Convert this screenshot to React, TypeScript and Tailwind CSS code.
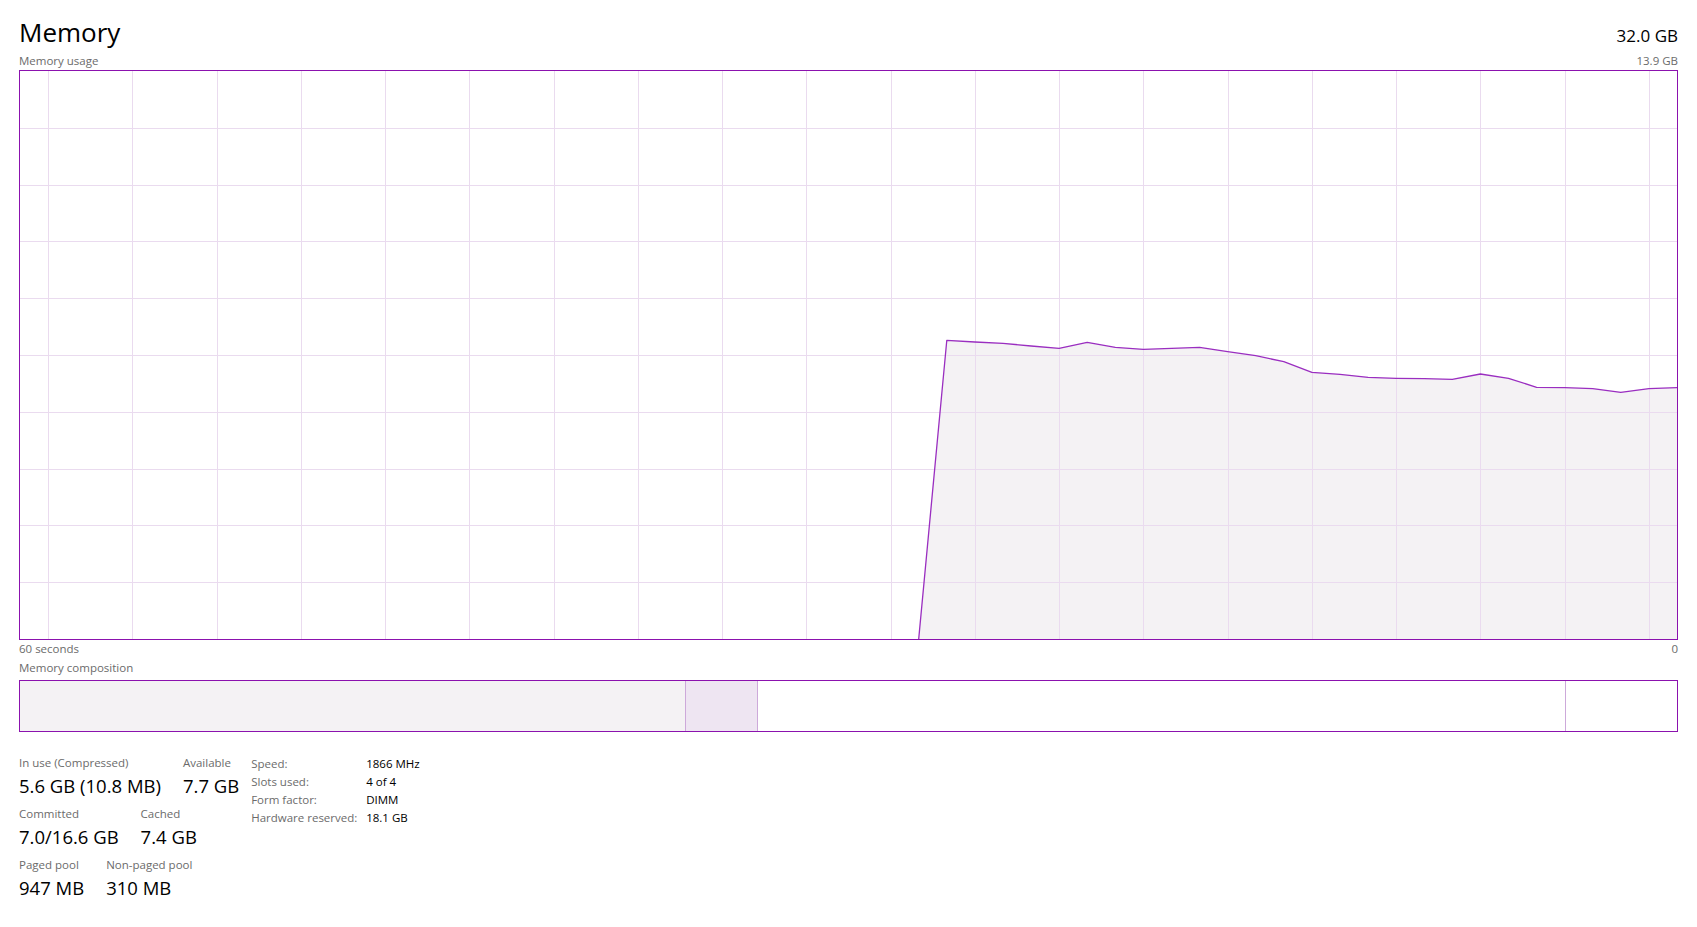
import React from "react";

const font = { fontFamily: '"Segoe UI", "Open Sans", sans-serif' };

// memory usage samples, pixel y inside the 1657x568 plot (index 32 sits on the floor)
const usage: [number, number][] = [
  [32, 568],
  [33, 269.3],
  [34, 271],
  [35, 272.3],
  [36, 275],
  [37, 277.3],
  [38, 271.3],
  [39, 276.3],
  [40, 278.3],
  [41, 277.3],
  [42, 276.3],
  [43, 280.7],
  [44, 284.7],
  [45, 290.7],
  [46, 301.3],
  [47, 303.3],
  [48, 306.3],
  [49, 307.3],
  [50, 307.7],
  [51, 308.3],
  [52, 303],
  [53, 307.3],
  [54, 316.3],
  [55, 316.7],
  [56, 317.7],
  [57, 321.3],
  [58, 317.7],
  [59, 316.7],
];

const W = 1657;
const H = 568;
const step = W / 59;

function UsageChart() {
  const pts = usage.map(([i, y]) => `${(i * step).toFixed(1)},${y}`).join(" ");
  const area = `${pts} ${W},${H} ${(32 * step).toFixed(1)},${H}`;
  const vLines = Array.from({ length: 20 }, (_, k) => Math.round(28 + 84.25 * k) + 0.5);
  const hLines = Array.from({ length: 9 }, (_, k) => Math.round(56.8 * (k + 1)) + 0.5);

  return (
    <div className="h-[570px] border border-[#8b12ae] bg-white">
      <svg className="block h-full w-full" viewBox={`0 0 ${W} ${H}`} preserveAspectRatio="none">
        <polygon points={area} fill="#f4f2f4" />
        {vLines.map((x) => (
          <line key={`v${x}`} x1={x} x2={x} y1={0} y2={H} stroke="#eadbef" strokeWidth={1} />
        ))}
        {hLines.map((y) => (
          <line key={`h${y}`} x1={0} x2={W} y1={y} y2={y} stroke="#eadbef" strokeWidth={1} />
        ))}
        <polyline points={pts} fill="none" stroke="#9a2ec0" strokeWidth={1.3} strokeLinejoin="round" />
      </svg>
    </div>
  );
}

function CompositionBar() {
  return (
    <div className="flex h-[52px] border border-[#8b12ae] bg-white">
      <div className="w-[666px] border-r border-[#cda9da] bg-[#f4f2f4]" />
      <div className="w-[72px] border-r border-[#cda9da] bg-[#eee5f2]" />
      <div className="flex-1 border-r border-[#cda9da]" />
      <div className="w-[111px]" />
    </div>
  );
}

function Stat({ label, value }: { label: string; value: string }) {
  return (
    <div className="flex flex-col">
      <span className="text-[11.5px] leading-[16px] text-[#6b6b6b]">{label}</span>
      <span className="mt-[3px] text-[18.5px] leading-[24px] text-black">{value}</span>
    </div>
  );
}

const hw = [
  ["Speed:", "1866 MHz"],
  ["Slots used:", "4 of 4"],
  ["Form factor:", "DIMM"],
  ["Hardware reserved:", "18.1 GB"],
];

export default function App() {
  return (
    <div className="min-h-screen bg-white px-[19px] pt-[19px]" style={font}>
      <div className="flex items-baseline justify-between">
        <h1 className="text-[26px] leading-[27px] text-black">Memory</h1>
        <span className="text-[17px] leading-[27px] text-black">32.0 GB</span>
      </div>
      <div className="mt-[4px] flex justify-between text-[11.5px] leading-[16px] text-[#6b6b6b]">
        <span>Memory usage</span>
        <span>13.9 GB</span>
      </div>
      <div className="mt-px">
        <UsageChart />
      </div>
      <div className="mt-px flex justify-between text-[11.5px] leading-[16px] text-[#6b6b6b]">
        <span>60 seconds</span>
        <span>0</span>
      </div>
      <div className="mt-[3px] text-[11.5px] leading-[16px] text-[#6b6b6b]">Memory composition</div>
      <div className="mt-[4px]">
        <CompositionBar />
      </div>

      <div className="mt-[23px] flex gap-[12px]">
        <div className="flex flex-col gap-[8px]">
          <div className="flex gap-[22px]">
            <Stat label="In use (Compressed)" value="5.6 GB (10.8 MB)" />
            <Stat label="Available" value="7.7 GB" />
          </div>
          <div className="flex gap-[22px]">
            <Stat label="Committed" value="7.0/16.6 GB" />
            <Stat label="Cached" value="7.4 GB" />
          </div>
          <div className="flex gap-[22px]">
            <Stat label="Paged pool" value="947 MB" />
            <Stat label="Non-paged pool" value="310 MB" />
          </div>
        </div>
        <div className="grid grid-cols-[115px_auto] content-start text-[11.5px] leading-[18px]">
          {hw.map(([k, v]) => (
            <React.Fragment key={k}>
              <span className="text-[#6b6b6b]">{k}</span>
              <span className="text-black">{v}</span>
            </React.Fragment>
          ))}
        </div>
      </div>
    </div>
  );
}
